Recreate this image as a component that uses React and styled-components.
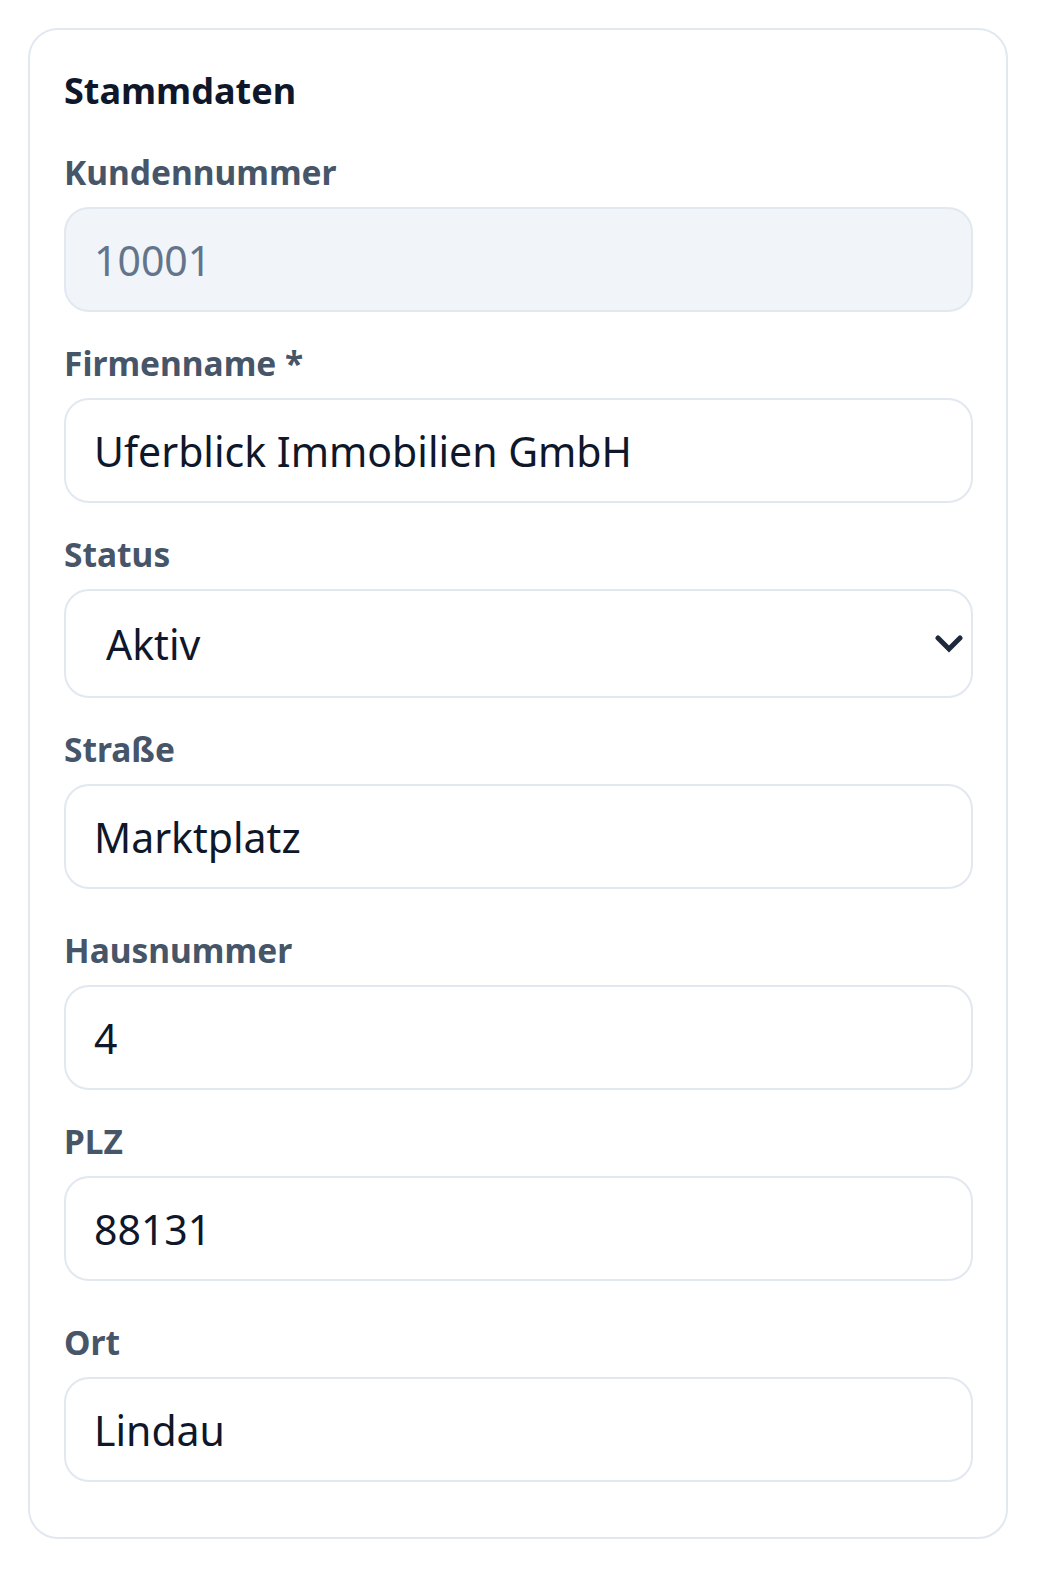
import React from 'react';
import styled, { createGlobalStyle } from 'styled-components';

// Stammdaten-Formular (Kundenstamm)

const GlobalStyle = createGlobalStyle`
  * { box-sizing: border-box; }
  body {
    margin: 0;
    background: #ffffff;
    font-family: 'Noto Sans', 'Open Sans', sans-serif;
  }
`;

const Page = styled.div`
  padding: 28px 42px 40px 28px;
`;

const Card = styled.section`
  width: 980px;
  border: 2px solid #e2e8f0;
  border-radius: 30px;
  padding: 36px 33px 55px 34px;
  background: #ffffff;
`;

const Title = styled.h2`
  margin: 0 0 34px 0;
  font-size: 36px;
  line-height: 50px;
  font-weight: 700;
  color: #0f172a;
`;

const Stack = styled.div`
  display: flex;
  flex-direction: column;
  gap: ${p => p.$gap}px;
`;

const Field = styled.div`
  display: flex;
  flex-direction: column;
`;

const Label = styled.label`
  font-size: 33.5px;
  line-height: 44px;
  font-weight: 700;
  color: #475569;
  margin-bottom: 13px;
`;

const Input = styled.input`
  width: 100%;
  height: 105px;
  border: 2px solid #e2e8f0;
  border-radius: 25px;
  padding: 0 28px;
  font-family: inherit;
  font-size: 41px;
  color: #0f172a;
  background: #ffffff;
  outline: none;

  &:disabled {
    background: #f1f5f9;
    color: #64748b;
    -webkit-text-fill-color: #64748b;
    opacity: 1;
  }
`;

const SelectWrap = styled.div`
  position: relative;
`;

const Select = styled.select`
  width: 100%;
  height: 109px;
  border: 2px solid #e2e8f0;
  border-radius: 25px;
  padding: 0 28px 0 40px;
  font-family: inherit;
  font-size: 41px;
  color: #0f172a;
  background: #ffffff;
  appearance: none;
  -webkit-appearance: none;
  outline: none;
`;

const Chevron = styled.svg`
  position: absolute;
  right: 10px;
  top: 50%;
  width: 28px;
  height: 18px;
  transform: translateY(-50%);
  pointer-events: none;
`;

function TextField({ label, value, disabled }) {
  return (
    <Field>
      <Label>{label}</Label>
      <Input value={value} disabled={disabled} readOnly />
    </Field>
  );
}

export default function App() {
  return (
    <Page>
      <GlobalStyle />
      <Card>
        <Title>Stammdaten</Title>
        <Stack $gap={29}>
          <TextField label="Kundennummer" value="10001" disabled />
          <TextField label="Firmenname *" value="Uferblick Immobilien GmbH" />
          <Field>
            <Label>Status</Label>
            <SelectWrap>
              <Select defaultValue="aktiv">
                <option value="aktiv">Aktiv</option>
                <option value="inaktiv">Inaktiv</option>
              </Select>
              <Chevron viewBox="0 0 28 18">
                <path d="M3 3 L14 14 L25 3" fill="none" stroke="#1e293b" strokeWidth="5" strokeLinecap="round" strokeLinejoin="miter" />
              </Chevron>
            </SelectWrap>
          </Field>
          <Stack $gap={39}>
            <TextField label="Straße" value="Marktplatz" />
            <TextField label="Hausnummer" value="4" />
          </Stack>
          <Stack $gap={39}>
            <TextField label="PLZ" value="88131" />
            <TextField label="Ort" value="Lindau" />
          </Stack>
        </Stack>
      </Card>
    </Page>
  );
}
